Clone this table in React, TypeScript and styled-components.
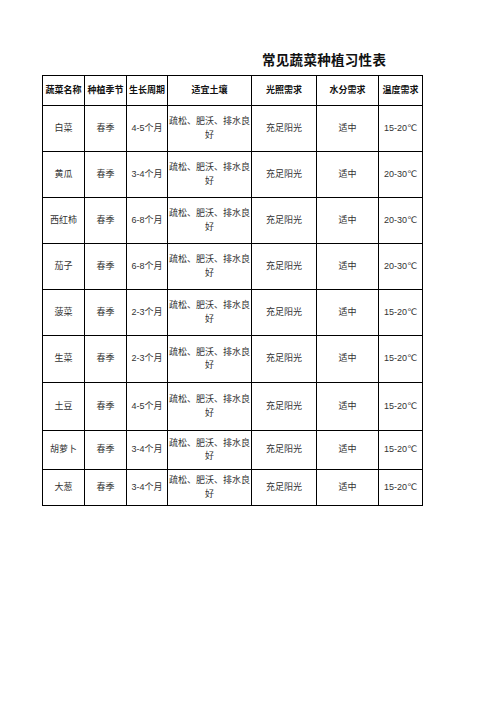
import React from 'react';
import styled, { createGlobalStyle } from 'styled-components';

const GlobalStyle = createGlobalStyle`
  html, body {
    margin: 0;
    padding: 0;
    background: #ffffff;
  }
  body {
    font-family: "Liberation Sans", "DejaVu Sans", "Noto Sans CJK SC", sans-serif;
    color: #222;
  }
`;

const Page = styled.div`
  width: 496px;
  height: 702px;
  padding: 53px 0 0 42px;
  box-sizing: border-box;
`;

const Title = styled.h1`
  margin: 0 0 6px 220px;
  font-size: 13.5px;
  line-height: 16px;
  font-weight: bold;
  color: #111;
  letter-spacing: 0.3px;
`;

const Sheet = styled.table`
  border-collapse: collapse;
  table-layout: fixed;
  width: 381px;
`;

const Row = styled.tr<{ $h: number }>`
  height: ${(p) => p.$h}px;
`;

const Cell = styled.td<{ $head?: boolean }>`
  border: 1px solid #000;
  padding: 0 1px;
  text-align: center;
  vertical-align: middle;
  font-size: 9px;
  line-height: 13.5px;
  color: ${(p) => (p.$head ? '#111' : '#333')};
  font-weight: ${(p) => (p.$head ? 600 : 400)};
  white-space: pre-line;
  overflow: hidden;
`;

const cols = [42, 42, 41, 84, 65, 62, 44];
const head = ['蔬菜名称', '种植季节', '生长周期', '适宜土壤', '光照需求', '水分需求', '温度需求'];

const soil = '疏松、肥沃、排水良\n好';
const rows: { h: number; cells: string[] }[] = [
  { h: 46, cells: ['白菜', '春季', '4-5个月', soil, '充足阳光', '适中', '15-20℃'] },
  { h: 46, cells: ['黄瓜', '春季', '3-4个月', soil, '充足阳光', '适中', '20-30℃'] },
  { h: 46, cells: ['西红柿', '春季', '6-8个月', soil, '充足阳光', '适中', '20-30℃'] },
  { h: 46, cells: ['茄子', '春季', '6-8个月', soil, '充足阳光', '适中', '20-30℃'] },
  { h: 46, cells: ['菠菜', '春季', '2-3个月', soil, '充足阳光', '适中', '15-20℃'] },
  { h: 47, cells: ['生菜', '春季', '2-3个月', soil, '充足阳光', '适中', '15-20℃'] },
  { h: 48, cells: ['土豆', '春季', '4-5个月', soil, '充足阳光', '适中', '15-20℃'] },
  { h: 39, cells: ['胡萝卜', '春季', '3-4个月', soil, '充足阳光', '适中', '15-20℃'] },
  { h: 36, cells: ['大葱', '春季', '3-4个月', soil, '充足阳光', '适中', '15-20℃'] },
];

export default function App() {
  return (
    <Page>
      <GlobalStyle />
      <Title>常见蔬菜种植习性表</Title>
      <Sheet>
        <colgroup>
          {cols.map((w, i) => (
            <col key={i} style={{ width: w }} />
          ))}
        </colgroup>
        <tbody>
          <Row $h={30}>
            {head.map((t) => (
              <Cell key={t} $head>
                {t}
              </Cell>
            ))}
          </Row>
          {rows.map((r, i) => (
            <Row key={i} $h={r.h}>
              {r.cells.map((c, j) => (
                <Cell key={j}>{c}</Cell>
              ))}
            </Row>
          ))}
        </tbody>
      </Sheet>
    </Page>
  );
}
